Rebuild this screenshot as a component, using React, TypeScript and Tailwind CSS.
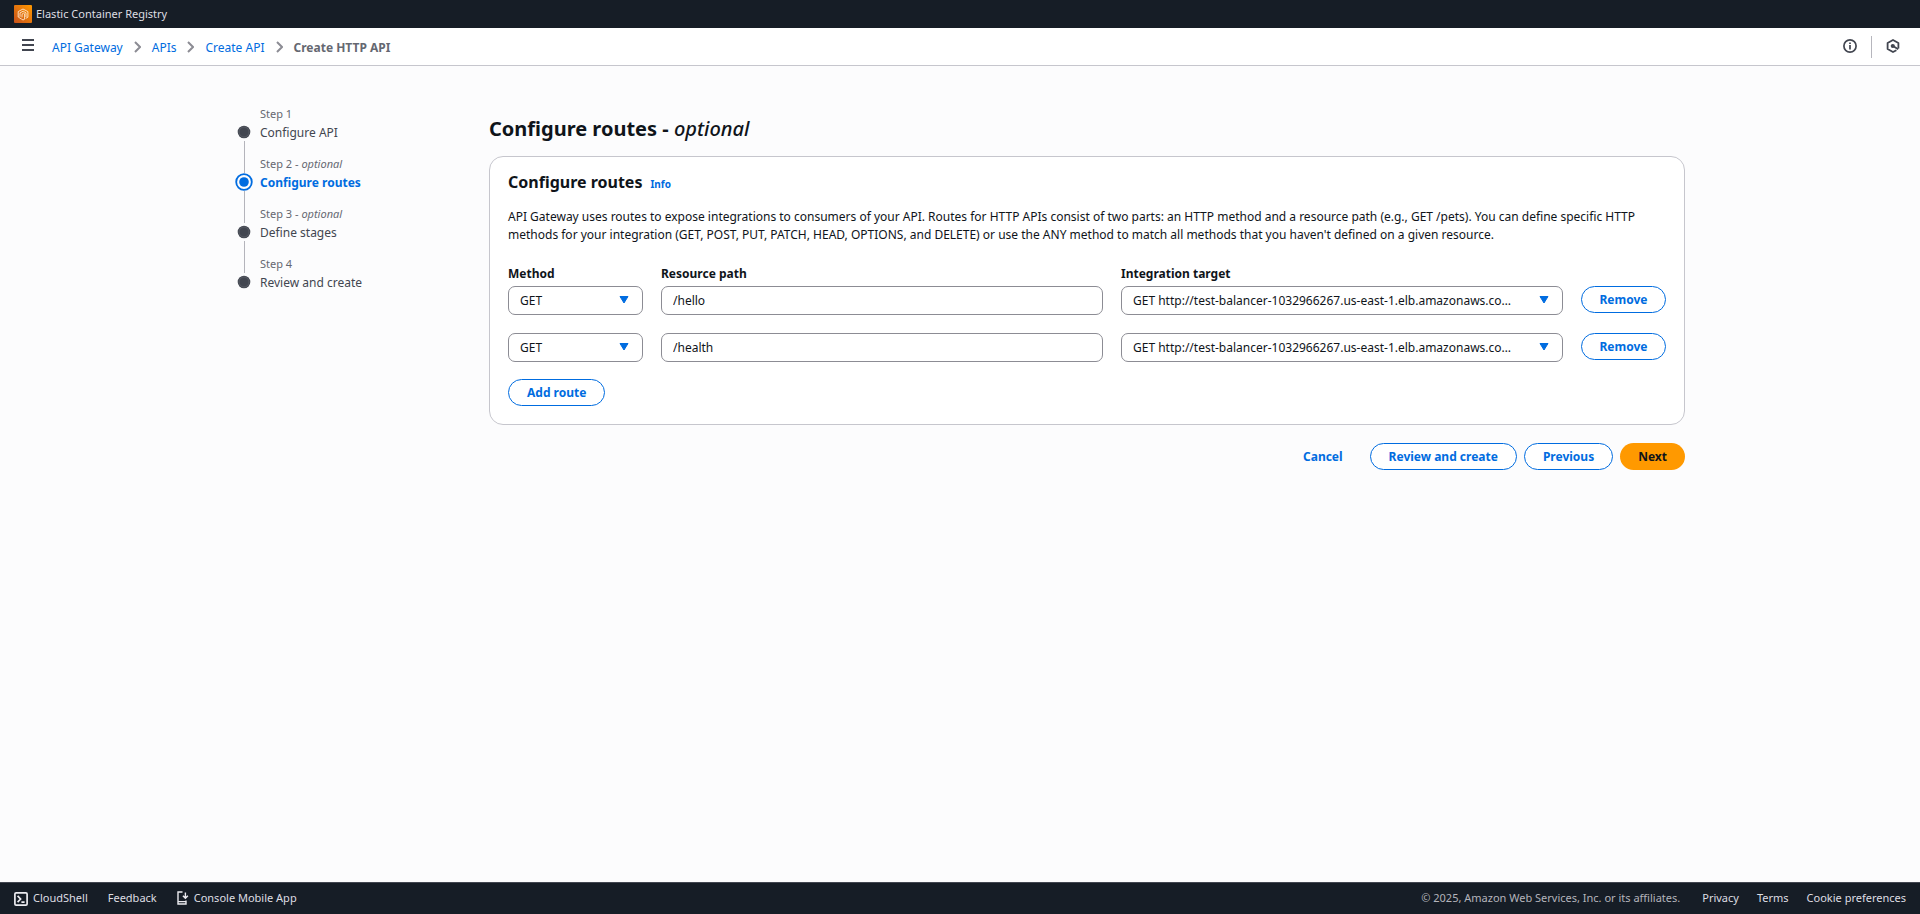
import React from "react";

const TARGET = "GET http://test-balancer-1032966267.us-east-1.elb.amazonaws.co…";

const steps = [
  { label: "Step 1", optional: false, name: "Configure API", active: false },
  { label: "Step 2", optional: true, name: "Configure routes", active: true },
  { label: "Step 3", optional: true, name: "Define stages", active: false },
  { label: "Step 4", optional: false, name: "Review and create", active: false },
];

const routes = [
  { id: "hello", path: "/hello" },
  { id: "health", path: "/health" },
];

function Separator() {
  return (
    <svg className="mx-[11px] mb-0.5 h-3 w-[7px]" viewBox="0 0 7 12" fill="none" stroke="#8c8c94" strokeWidth="2" aria-hidden="true">
      <path d="M1 1l5 5-5 5" />
    </svg>
  );
}

function TopBar() {
  return (
    <div className="flex h-7 items-center bg-[#161d26] px-3.5">
      <a href="#" className="flex items-center gap-1 text-[11px] text-[#dedee3]">
        <svg width="18" height="18" viewBox="0 0 18 18" fill="none" aria-hidden="true">
          <defs>
            <linearGradient id="ecr" x1="0" y1="18" x2="18" y2="0" gradientUnits="userSpaceOnUse">
              <stop stopColor="#c8511b" />
              <stop offset="1" stopColor="#ff9900" />
            </linearGradient>
          </defs>
          <rect width="18" height="18" rx="1" fill="url(#ecr)" />
          <g stroke="#ffe9d0" strokeWidth="0.9" strokeLinejoin="round" strokeLinecap="round">
            <path d="M7.4 14 4.2 12V6.6L9 4l4.9 2.6v5.6l-1.8 1" />
            <path d="M6 11.4V7.9L9.2 6.2l2.8 1.7v3.8M8 12V9.2l1.6-1 1 .7v5.3L9 15l-.9-.6" />
          </g>
        </svg>
        Elastic Container Registry
      </a>
    </div>
  );
}

function Header() {
  return (
    <header className="flex h-[38px] items-center justify-between border-b border-[#c6c6cd] bg-white pr-3 pl-5">
      <div className="flex items-center">
        <button type="button" aria-label="Open navigation" className="mr-4 flex h-5 w-4 items-center justify-center pb-1">
          <svg width="14" height="12" viewBox="0 0 14 12" stroke="#424650" strokeWidth="2" aria-hidden="true">
            <path d="M1 1h12M1 6h12M1 11h12" />
          </svg>
        </button>
        <nav aria-label="Breadcrumbs" className="flex items-center pt-0.5 text-xs text-[#006ce0]">
          <a href="#">API Gateway</a>
          <Separator />
          <a href="#">APIs</a>
          <Separator />
          <a href="#">Create API</a>
          <Separator />
          <span className="font-bold text-[#656871]">Create HTTP API</span>
        </nav>
      </div>
      <div className="flex items-center">
        <button type="button" aria-label="Info" className="px-3.5 pb-0.5">
          <svg width="14" height="14" viewBox="0 0 14 14" fill="none" stroke="#424650" strokeWidth="1.7" aria-hidden="true">
            <circle cx="7" cy="7" r="6.1" />
            <path d="M7 6v4.4M7 3.4v1.7" />
          </svg>
        </button>
        <div className="h-[22px] w-px bg-[#b6b6bd]" />
        <button type="button" aria-label="Assistant" className="pr-2 pb-0.5 pl-3.5">
          <svg width="14" height="14" viewBox="0 0 14 14" fill="none" stroke="#424650" strokeWidth="1.8" strokeLinejoin="round" aria-hidden="true">
            <path d="M12.4 9.6V4L7 1 1.6 4v6L7 13l3.4-1.8" />
            <path d="M7 7l5.2 3.2" />
            <circle cx="6.8" cy="7" r="1.2" fill="#424650" />
          </svg>
        </button>
      </div>
    </header>
  );
}

function StepMarker({ active }: { active: boolean }) {
  return active ? (
    <svg width="18" height="18" viewBox="0 0 18 18" fill="none" aria-hidden="true">
      <circle cx="9" cy="9" r="7.8" stroke="#006ce0" strokeWidth="1.8" />
      <circle cx="9" cy="9" r="4.8" fill="#006ce0" />
    </svg>
  ) : (
    <svg width="18" height="18" viewBox="0 0 18 18" fill="none" aria-hidden="true">
      <circle cx="9" cy="9" r="6.3" fill="#424650" />
      <circle cx="9" cy="9" r="5" stroke="#656871" strokeWidth="0.6" />
    </svg>
  );
}

function Steps() {
  return (
    <nav aria-label="Steps" className="w-[254px] shrink-0 pt-[39px]">
      <ol>
        {steps.map((step, i) => (
          <li key={step.label} className="grid h-[50px] grid-cols-[18px_1fr] gap-x-[7px]">
            <div className="flex flex-col items-center">
              <div className={i === 0 ? "h-[18px] w-px" : "h-[18px] w-px bg-[#b4b4bb]"} />
              <StepMarker active={step.active} />
              <div className={i === steps.length - 1 ? "w-px flex-1" : "w-px flex-1 bg-[#b4b4bb]"} />
            </div>
            <div>
              <div className="text-[11px] leading-[18px] text-[#656871]">
                {step.label}
                {step.optional && (
                  <>
                    {" - "}
                    <i>optional</i>
                  </>
                )}
              </div>
              <a
                href="#"
                className={
                  step.active
                    ? "block text-xs leading-5 font-bold text-[#006ce0]"
                    : "block text-xs leading-5 text-[#424650]"
                }
              >
                {step.name}
              </a>
            </div>
          </li>
        ))}
      </ol>
    </nav>
  );
}

function SelectBox({ label, value }: { label: string; value: string }) {
  return (
    <div className="relative">
      <select
        aria-label={label}
        defaultValue={value}
        className="block h-[29px] w-full appearance-none truncate rounded-[7px] border border-[#8c8c94] bg-white pr-8 pl-[11px] text-xs text-[#0f141a]"
      >
        <option>{value}</option>
      </select>
      <svg
        className="pointer-events-none absolute top-[9px] right-[14px]"
        width="10"
        height="9"
        viewBox="0 0 10 9"
        fill="#006ce0"
        stroke="#006ce0"
        strokeLinejoin="round"
        aria-hidden="true"
      >
        <path d="M1 1.5h8L5 8z" />
      </svg>
    </div>
  );
}

function OutlineButton({ children }: { children: React.ReactNode }) {
  return (
    <button
      type="button"
      className="flex h-[27px] items-center justify-center rounded-full border border-[#006ce0] bg-white px-[18px] text-xs font-bold whitespace-nowrap text-[#006ce0]"
    >
      {children}
    </button>
  );
}

function RoutesCard() {
  return (
    <section className="rounded-[14px] border border-[#c6c6cd] bg-white px-[18px] pt-[14px] pb-[18px]">
      <div className="flex items-baseline gap-2">
        <h2 className="text-base leading-[23px] font-bold">Configure routes</h2>
        <a href="#" className="text-[10px] leading-none font-bold text-[#006ce0]">
          Info
        </a>
      </div>
      <p className="mt-[14px] text-xs leading-[18px]">
        API Gateway uses routes to expose integrations to consumers of your API. Routes for HTTP APIs consist of two
        parts: an HTTP method and a resource path (e.g., GET /pets). You can define specific HTTP methods for your
        integration (GET, POST, PUT, PATCH, HEAD, OPTIONS, and DELETE) or use the ANY method to match all methods that
        you haven't defined on a given resource.
      </p>
      <div className="mt-[21px] grid grid-cols-[135px_1fr_1fr_85px] gap-x-[18px] text-xs leading-[18px] font-bold">
        <span>Method</span>
        <span>Resource path</span>
        <span>Integration target</span>
      </div>
      <div className="mt-[3px] flex flex-col gap-[18px]">
        {routes.map((route) => (
          <div key={route.id} className="grid grid-cols-[135px_1fr_1fr_85px] items-start gap-x-[18px]">
            <SelectBox label="Method" value="GET" />
            <input
              aria-label="Resource path"
              defaultValue={route.path}
              className="h-[29px] w-full rounded-[7px] border border-[#8c8c94] bg-white px-[11px] text-xs text-[#0f141a]"
            />
            <SelectBox label="Integration target" value={TARGET} />
            <OutlineButton>Remove</OutlineButton>
          </div>
        ))}
      </div>
      <div className="mt-[17px] flex">
        <OutlineButton>Add route</OutlineButton>
      </div>
    </section>
  );
}

function Footer() {
  return (
    <footer className="flex h-8 items-center justify-between border-t border-[#424650] bg-[#161d26] px-3.5 text-[11px] text-[#dedee3]">
      <div className="flex items-center gap-5">
        <a href="#" className="flex items-center gap-[5px]">
          <svg width="14" height="14" viewBox="0 0 14 14" fill="none" stroke="#ebebf0" strokeWidth="1.7" aria-hidden="true">
            <rect x="0.9" y="0.9" width="12.2" height="12.2" rx="1.2" />
            <path d="M3.6 3.8 6.6 7l-3 3.2M7.4 10.2h3.2" />
          </svg>
          CloudShell
        </a>
        <a href="#">Feedback</a>
        <a href="#" className="flex items-center gap-[5px]">
          <svg className="mb-0.5" width="12" height="14" viewBox="0 0 12 14" fill="none" stroke="#ebebf0" strokeWidth="1.4" aria-hidden="true">
            <path d="M5.5 1H1v12h8V9.5M1 10.6h8M8.4 1.4v5.8M5.9 4.8l2.5 2.5 2.5-2.5" />
          </svg>
          Console Mobile App
        </a>
      </div>
      <div className="flex items-center gap-[18px]">
        <span className="mr-1 text-[#b4b4bb]">© 2025, Amazon Web Services, Inc. or its affiliates.</span>
        <a href="#">Privacy</a>
        <a href="#">Terms</a>
        <a href="#">Cookie preferences</a>
      </div>
    </footer>
  );
}

export default function App() {
  return (
    <div className="flex min-h-screen flex-col bg-[#fcfcfd] font-['Noto_Sans',sans-serif] text-[#0f141a]">
      <TopBar />
      <Header />
      <main className="mx-auto flex w-full max-w-[1450px] flex-1">
        <Steps />
        <div className="min-w-0 flex-1 pt-[49px]">
          <h1 className="text-xl leading-[27px] font-bold">
            Configure routes - <i className="font-medium">optional</i>
          </h1>
          <div className="mt-[14px]">
            <RoutesCard />
          </div>
          <div className="mt-[18px] flex items-center justify-end gap-[7px]">
            <button type="button" className="px-5 text-xs font-bold text-[#006ce0]">
              Cancel
            </button>
            <OutlineButton>Review and create</OutlineButton>
            <OutlineButton>Previous</OutlineButton>
            <button type="button" className="h-[27px] rounded-full bg-[#ff9900] px-[18px] text-xs font-bold">
              Next
            </button>
          </div>
        </div>
      </main>
      <Footer />
    </div>
  );
}
